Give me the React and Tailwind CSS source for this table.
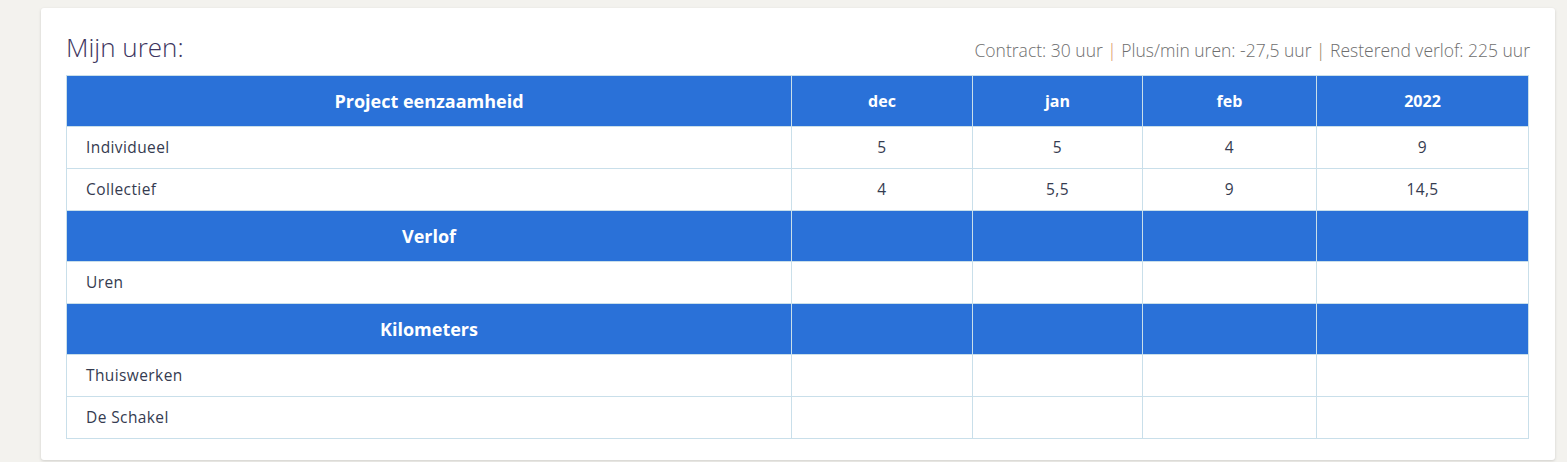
import React from "react";

const months = ["dec", "jan", "feb", "2022"];
const colWidths = ["w-[725px]", "w-[181px]", "w-[170px]", "w-[174px]", "w-[212px]"];

const sections = [
  {
    title: "Project eenzaamheid",
    showMonths: true,
    rows: [
      { label: "Individueel", values: ["5", "5", "4", "9"] },
      { label: "Collectief", values: ["4", "5,5", "9", "14,5"] },
    ],
  },
  { title: "Verlof", rows: [{ label: "Uren", values: ["", "", "", ""] }] },
  {
    title: "Kilometers",
    rows: [
      { label: "Thuiswerken", values: ["", "", "", ""] },
      { label: "De Schakel", values: ["", "", "", ""] },
    ],
  },
];

function SectionHeader({ title, showMonths }) {
  return (
    <tr className="h-[51px] bg-[#2a71d8] text-white">
      <th className="border border-[#c9dfea] text-[18px] font-bold">{title}</th>
      {months.map((m) => (
        <th key={m} className="border border-[#c9dfea] text-[16px] font-bold">
          {showMonths ? m : ""}
        </th>
      ))}
    </tr>
  );
}

function DataRow({ label, values }) {
  return (
    <tr className="h-[42px] bg-white text-[15.5px] tracking-[0.4px] text-[#353b50]">
      <td className="border border-[#c9dfea] pl-[19px]">{label}</td>
      {values.map((v, i) => (
        <td key={i} className="border border-[#c9dfea] text-center">
          {v}
        </td>
      ))}
    </tr>
  );
}

export default function App() {
  return (
    <div
      className="min-h-[462px] bg-[#f3f2ee] pt-[8px] pl-[41px]"
      style={{ fontFamily: '"Open Sans", "Liberation Sans", sans-serif' }}
    >
      <div className="w-[1514px] rounded-[3px] bg-white px-[25px] pt-[21px] pb-[21px] shadow-[0_1px_3px_rgba(0,0,0,0.15)]">
        <div className="mb-[10px] flex items-baseline justify-between">
          <h1 className="text-[26px] leading-[36px] font-light text-[#3d3560]">Mijn uren:</h1>
          <p className="text-[17.5px] font-light text-[#6e6e6e]">
            Contract: 30 uur <span className="text-[#d98a5a]">|</span> Plus/min uren: -27,5 uur{" "}
            <span className="text-[#8a7a55]">|</span> Resterend verlof: 225 uur
          </p>
        </div>
        <table className="w-[1462px] table-fixed border-collapse">
          <colgroup>
            {colWidths.map((w, i) => (
              <col key={i} className={w} />
            ))}
          </colgroup>
          <tbody>
            {sections.map((s) => (
              <React.Fragment key={s.title}>
                <SectionHeader title={s.title} showMonths={s.showMonths} />
                {s.rows.map((r) => (
                  <DataRow key={r.label} {...r} />
                ))}
              </React.Fragment>
            ))}
          </tbody>
        </table>
      </div>
    </div>
  );
}
